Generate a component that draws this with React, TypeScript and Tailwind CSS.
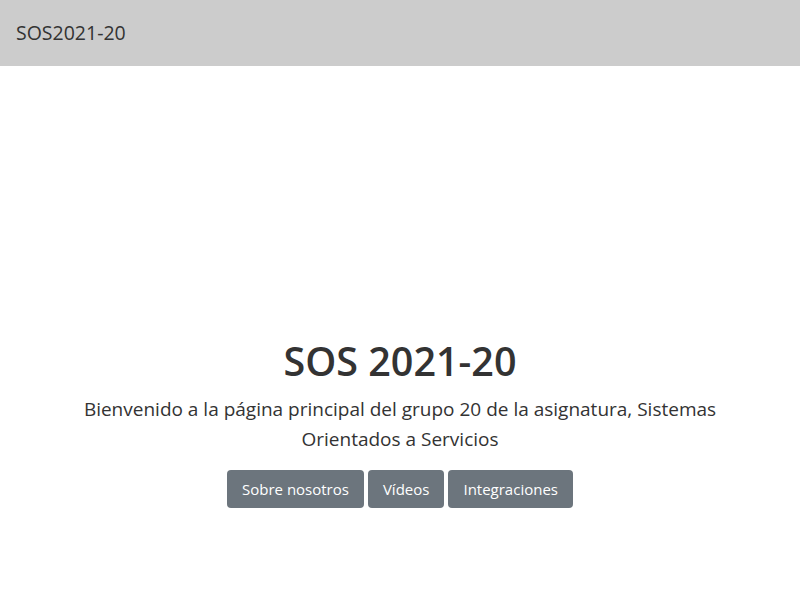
import React from "react";

export default function App() {
  return (
    <div className="min-h-[600px] bg-white text-[#333333]" style={{ fontFamily: '"Open Sans", "Noto Sans", sans-serif' }}>
      <header className="h-[66px] bg-[#cccccc] flex items-center px-4">
        <span className="text-[19.5px] leading-none">SOS2021-20</span>
      </header>
      <main className="flex flex-col items-center pt-[272px] text-center">
        <h1 className="text-[39.5px] font-semibold leading-[46px]">SOS 2021-20</h1>
        <p className="mt-[10px] max-w-[650px] text-[19px] leading-[30px]">
          Bienvenido a la página principal del grupo 20 de la asignatura, Sistemas Orientados a Servicios
        </p>
        <div className="mt-[16px] flex gap-[4px]">
          <button className="h-[38px] px-[15px] rounded bg-[#6c757d] text-white text-[15px]">Sobre nosotros</button>
          <button className="h-[38px] px-[15px] rounded bg-[#6c757d] text-white text-[15px]">Vídeos</button>
          <button className="h-[38px] px-[15px] rounded bg-[#6c757d] text-white text-[15px]">Integraciones</button>
        </div>
      </main>
    </div>
  );
}
